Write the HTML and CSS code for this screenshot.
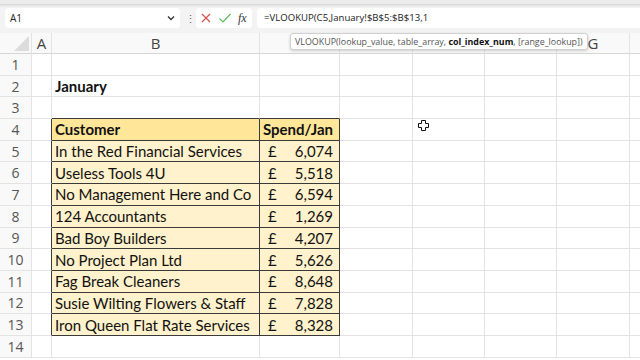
FILE: index.html
```html
<!DOCTYPE html>
<html lang="en">
<head>
  <meta charset="UTF-8">
  <title>January - VLOOKUP</title>
  <link rel="stylesheet" href="styles.css">
</head>
<body>
  <div class="ribbon-edge"></div>

  <div class="formula-bar">
    <div class="name-box">
      <span>A1</span>
      <svg class="chevron" width="8" height="6" viewBox="0 0 8 6"><path d="M1 1.5 L4 4.5 L7 1.5" fill="none" stroke="#333" stroke-width="1.3"/></svg>
    </div>
    <span class="dots">&#8942;</span>
    <div class="fx-box">
      <svg width="12" height="12" viewBox="0 0 12 12"><path d="M2 2 L10 10 M10 2 L2 10" stroke="#d9534f" stroke-width="1.2"/></svg>
      <svg width="14" height="12" viewBox="0 0 14 12"><path d="M1.5 6.5 L5 10 L12.5 2" fill="none" stroke="#5cb85c" stroke-width="1.2"/></svg>
      <span class="fx">fx</span>
    </div>
    <div class="formula-input">=VLOOKUP(C5,January!$B$5:$B$13,1</div>
  </div>

  <div class="sheet">
    <table class="grid">
      <colgroup>
        <col class="w-head"><col class="w-a"><col class="w-b"><col class="w-c">
        <col class="w-d"><col class="w-e"><col class="w-f"><col class="w-g"><col class="w-h">
      </colgroup>
      <!-- C to F headers sit under the argument tooltip -->
      <tr class="col-heads">
        <th class="corner"><span class="tri"></span></th>
        <th>A</th><th>B</th><th></th><th></th><th></th><th></th><th>G</th><th></th>
      </tr>
      <tr><th>1</th><td></td><td></td><td></td><td></td><td></td><td></td><td></td><td></td></tr>
      <tr><th>2</th><td></td><td class="title">January</td><td></td><td></td><td></td><td></td><td></td><td></td></tr>
      <tr><th>3</th><td></td><td class="above"></td><td class="above"></td><td></td><td></td><td></td><td></td><td></td></tr>
      <tr><th>4</th><td class="before"></td><td class="t-head">Customer</td><td class="t-head">Spend/Jan</td><td></td><td></td><td></td><td></td><td></td></tr>
      <tr><th>5</th><td class="before"></td><td class="t-cell">In the Red Financial Services</td><td class="t-cell money"><span>£</span><span>6,074</span></td><td></td><td></td><td></td><td></td><td></td></tr>
      <tr><th>6</th><td class="before"></td><td class="t-cell">Useless Tools 4U</td><td class="t-cell money"><span>£</span><span>5,518</span></td><td></td><td></td><td></td><td></td><td></td></tr>
      <tr><th>7</th><td class="before"></td><td class="t-cell">No Management Here and Co</td><td class="t-cell money"><span>£</span><span>6,594</span></td><td></td><td></td><td></td><td></td><td></td></tr>
      <tr><th>8</th><td class="before"></td><td class="t-cell">124 Accountants</td><td class="t-cell money"><span>£</span><span>1,269</span></td><td></td><td></td><td></td><td></td><td></td></tr>
      <tr><th>9</th><td class="before"></td><td class="t-cell">Bad Boy Builders</td><td class="t-cell money"><span>£</span><span>4,207</span></td><td></td><td></td><td></td><td></td><td></td></tr>
      <tr><th>10</th><td class="before"></td><td class="t-cell">No Project Plan Ltd</td><td class="t-cell money"><span>£</span><span>5,626</span></td><td></td><td></td><td></td><td></td><td></td></tr>
      <tr><th>11</th><td class="before"></td><td class="t-cell">Fag Break Cleaners</td><td class="t-cell money"><span>£</span><span>8,648</span></td><td></td><td></td><td></td><td></td><td></td></tr>
      <tr><th>12</th><td class="before"></td><td class="t-cell">Susie Wilting Flowers &amp; Staff</td><td class="t-cell money"><span>£</span><span>7,828</span></td><td></td><td></td><td></td><td></td><td></td></tr>
      <tr><th>13</th><td class="before"></td><td class="t-cell">Iron Queen Flat Rate Services</td><td class="t-cell money"><span>£</span><span>8,328</span></td><td></td><td></td><td></td><td></td><td></td></tr>
      <tr><th>14</th><td></td><td></td><td></td><td></td><td></td><td></td><td></td><td></td></tr>
    </table>

    <div class="tooltip">VLOOKUP(lookup_value, table_array, <b>col_index_num</b>, [range_lookup])</div>

    <svg class="cursor" width="11" height="11" viewBox="0 0 11 11">
      <path d="M3.5 0.5 H7.5 V3.5 H10.5 V7.5 H7.5 V10.5 H3.5 V7.5 H0.5 V3.5 H3.5 Z" fill="#fff" stroke="#111" stroke-width="1"/>
    </svg>
  </div>
</body>
</html>
```

FILE: styles.css
```css
body {
  margin: 0;
  width: 640px;
  height: 360px;
  overflow: hidden;
  background: #f3f3f3;
  font-family: "Open Sans", "Noto Sans", sans-serif;
}
.ribbon-edge {
  height: 4px;
  background: #ececec;
  border-bottom: 1px solid #dadada;
  box-shadow: 0 1px 2px rgba(0,0,0,0.08);
}
.formula-bar {
  display: flex;
  align-items: center;
  gap: 5px;
  height: 20px;
  padding: 3px 0 5px 5px;
}
.name-box {
  display: flex;
  align-items: center;
  justify-content: space-between;
  width: 175px;
  height: 20px;
  padding: 0 5px;
  box-sizing: border-box;
  background: #fff;
  border-radius: 4px;
  font-size: 10px;
  color: #222;
}
.dots {
  font-size: 11px;
  color: #666;
  width: 6px;
  text-align: center;
}
.fx-box {
  display: flex;
  align-items: center;
  gap: 6px;
  width: 56px;
  height: 20px;
  padding: 0 4px;
  box-sizing: border-box;
  background: #fff;
  border-radius: 4px;
}
.fx {
  font-family: "Liberation Serif", serif;
  font-style: italic;
  font-size: 12px;
  color: #333;
}
.formula-input {
  flex: 1;
  height: 20px;
  line-height: 20px;
  padding-left: 7px;
  background: #fff;
  border-radius: 4px 0 0 4px;
  font-size: 9.6px;
  color: #222;
}
.sheet {
  position: relative;
  background: #fff;
  height: 330px;
}
.grid {
  border-collapse: separate;
  border-spacing: 0;
  table-layout: fixed;
  width: 660px;
}
.w-head { width: 32px; }
.w-a { width: 20px; }
.w-b { width: 208px; }
.w-c { width: 80px; }
.w-d { width: 73px; }
.w-e { width: 72px; }
.w-f { width: 72px; }
.w-g { width: 73px; }
.w-h { width: 30px; }
.grid th, .grid td {
  height: 21.7px;
  padding: 0;
  box-sizing: border-box;
  border-right: 1px solid #e3e3e3;
  border-bottom: 1px solid #e3e3e3;
  white-space: nowrap;
  overflow: hidden;
}
.grid th {
  background: #f9f9f9;
  font-weight: normal;
  font-size: 14px;
  color: #555;
  text-align: center;
}
.col-heads th {
  height: 21px;
  font-size: 15px;
  color: #444;
  border-bottom-color: #d6d6d6;
}
.corner {
  position: relative;
}
.tri {
  position: absolute;
  right: 2px;
  bottom: 2px;
  width: 0;
  height: 0;
  border-left: 15px solid transparent;
  border-bottom: 15px solid #dcdcdc;
}
.grid td {
  font-family: "Lato", "Open Sans", sans-serif;
  font-size: 15px;
  color: #111;
}
.title {
  font-weight: bold;
  padding-left: 3px !important;
}
.above {
  border-bottom-color: #3a3a3a !important;
}
.before {
  border-right-color: #3a3a3a !important;
}
.t-head, .t-cell {
  border-right-color: #3a3a3a !important;
  border-bottom-color: #3a3a3a !important;
  padding-left: 3px !important;
}
.t-head {
  background: #ffe699;
  font-weight: bold;
}
.t-cell {
  background: #fff2cc;
}
.money span:first-child {
  float: left;
  padding-left: 5px;
}
.money span:last-child {
  float: right;
  padding-right: 6px;
}
.tooltip {
  position: absolute;
  left: 290px;
  top: 0;
  height: 15px;
  line-height: 15px;
  padding: 0 4px;
  background: #fff;
  border: 1px solid #d0d0d0;
  border-radius: 3px;
  box-shadow: 0 1px 3px rgba(0,0,0,0.18);
  font-size: 8.9px;
  color: #555;
  white-space: nowrap;
}
.tooltip b {
  color: #111;
}
.cursor {
  position: absolute;
  left: 418px;
  top: 87px;
}
```
